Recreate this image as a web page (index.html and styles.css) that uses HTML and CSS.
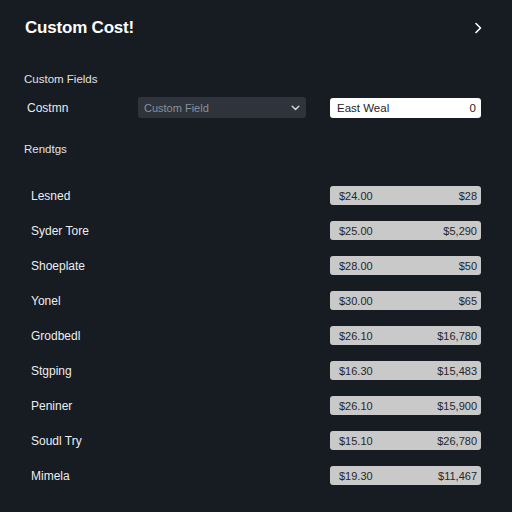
FILE: index.html
```html
<!DOCTYPE html>
<html>
<head>
<meta charset="utf-8">
<link rel="stylesheet" href="styles.css">
</head>
<body>
<div class="page">
  <header class="header">
    <h1 class="title">Custom Cost!</h1>
    <svg class="chev" width="8" height="12" viewBox="0 0 8 12"><path d="M2 1.5 L6.5 6 L2 10.5" fill="none" stroke="#fff" stroke-width="1.6" stroke-linecap="round" stroke-linejoin="round"/></svg>
  </header>

  <div class="section-label">Custom Fields</div>
  <div class="field-row">
    <div class="field-name">Costmn</div>
    <div class="select">
      <span>Custom Field</span>
      <svg width="9" height="6" viewBox="0 0 9 6"><path d="M1.2 1.2 L4.5 4.5 L7.8 1.2" fill="none" stroke="#d0d3d8" stroke-width="1.5" stroke-linecap="round" stroke-linejoin="round"/></svg>
    </div>
    <div class="input">
      <span>East Weal</span>
      <span>0</span>
    </div>
  </div>

  <div class="section-label second">Rendtgs</div>

  <div class="rows">
    <div class="row"><div class="name">Lesned</div><div class="bar"><span>$24.00</span><span>$28</span></div></div>
    <div class="row"><div class="name">Syder Tore</div><div class="bar"><span>$25.00</span><span>$5,290</span></div></div>
    <div class="row"><div class="name">Shoeplate</div><div class="bar"><span>$28.00</span><span>$50</span></div></div>
    <div class="row"><div class="name">Yonel</div><div class="bar"><span>$30.00</span><span>$65</span></div></div>
    <div class="row"><div class="name">Grodbedl</div><div class="bar"><span>$26.10</span><span>$16,780</span></div></div>
    <div class="row"><div class="name">Stgping</div><div class="bar"><span>$16.30</span><span>$15,483</span></div></div>
    <div class="row"><div class="name">Peniner</div><div class="bar"><span>$26.10</span><span>$15,900</span></div></div>
    <div class="row"><div class="name">Soudl Try</div><div class="bar"><span>$15.10</span><span>$26,780</span></div></div>
    <div class="row"><div class="name">Mimela</div><div class="bar"><span>$19.30</span><span>$11,467</span></div></div>
  </div>
</div>
</body>
</html>
```

FILE: styles.css
```css
html, body {
  margin: 0;
  padding: 0;
  background: #171b22;
}
body {
  width: 512px;
  height: 512px;
  overflow: hidden;
  font-family: "Liberation Sans", Arial, sans-serif;
  color: #e8e9eb;
}
.page {
  padding: 18px 31px 0 24px;
}
.header {
  display: flex;
  align-items: center;
  justify-content: space-between;
  height: 20px;
}
.title {
  margin: 0 0 0 1px;
  font-size: 17px;
  font-weight: bold;
  color: #ffffff;
  letter-spacing: -0.2px;
}
.chev {
  margin-right: -1px;
}
.section-label {
  margin-top: 35px;
  font-size: 11.5px;
  color: #e0e2e5;
  height: 13px;
  line-height: 13px;
}
.section-label.second {
  margin-top: 25px;
}
.field-row {
  display: flex;
  align-items: center;
  margin-top: 11px;
  height: 21px;
}
.field-name {
  width: 111px;
  padding-left: 3px;
  font-size: 12px;
  color: #e8e9eb;
}
.select {
  width: 168px;
  height: 21px;
  box-sizing: border-box;
  background: #2f343c;
  border-radius: 3px;
  display: flex;
  align-items: center;
  justify-content: space-between;
  padding: 0 6px 0 6px;
  font-size: 11px;
  color: #8b9097;
}
.input {
  margin-left: 24px;
  width: 151px;
  height: 20px;
  box-sizing: border-box;
  background: #ffffff;
  border-radius: 3px;
  display: flex;
  align-items: center;
  justify-content: space-between;
  padding: 0 5px 0 7px;
  font-size: 11.5px;
  color: #222428;
}
.rows {
  margin-top: 30px;
  display: flex;
  flex-direction: column;
  gap: 16px;
}
.row {
  display: flex;
  align-items: center;
  justify-content: space-between;
  height: 19px;
}
.name {
  padding-left: 7px;
  font-size: 12px;
  color: #eceef0;
}
.bar {
  width: 151px;
  height: 19px;
  box-sizing: border-box;
  background: #c9c9c9;
  border-radius: 3px;
  display: flex;
  align-items: center;
  justify-content: space-between;
  padding: 0 4px 0 9px;
  font-size: 11px;
  color: #25272b;
}
```
